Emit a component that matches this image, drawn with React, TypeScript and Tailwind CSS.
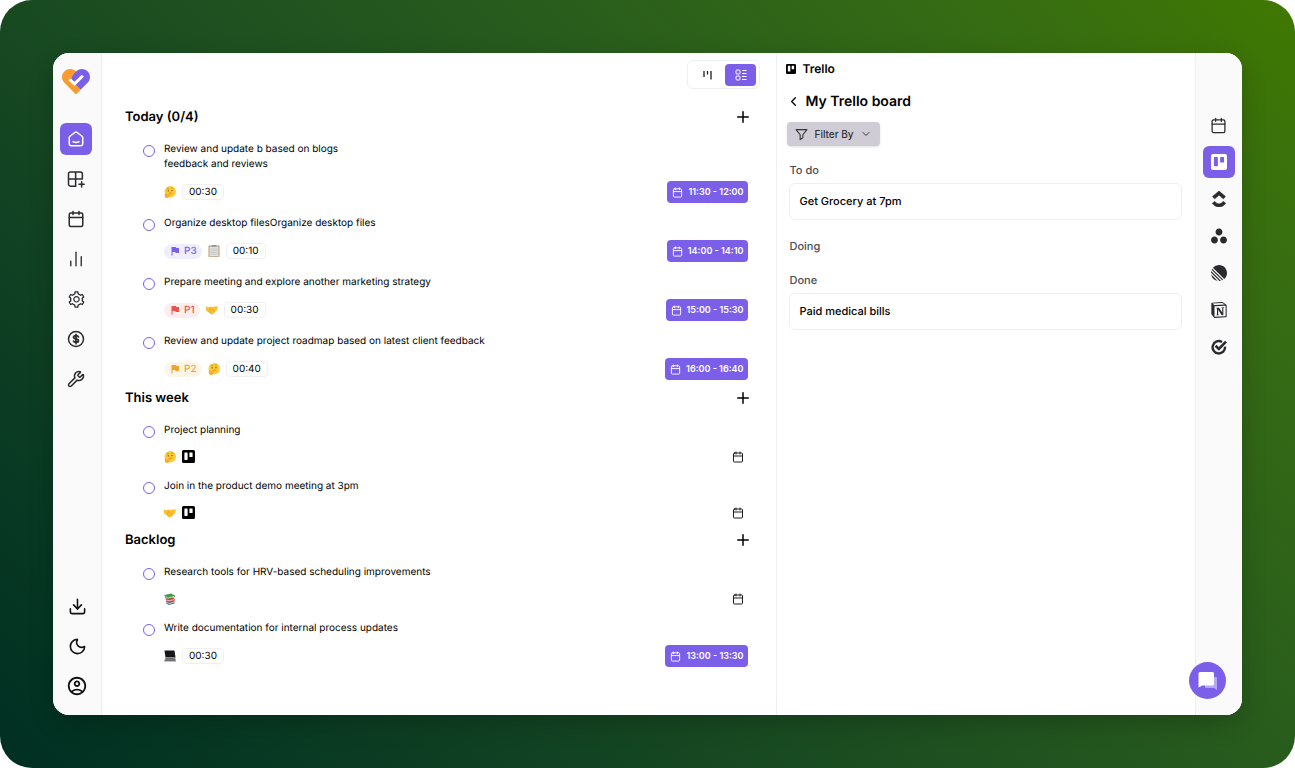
import type { ReactNode } from 'react'
import {
  Calendar,
  ChartNoAxesColumn,
  ChevronDown,
  ChevronLeft,
  Download,
  Moon,
  Plus,
  Wrench,
} from 'lucide-react'
import { AiOutlineSetting } from 'react-icons/ai'
import { MdFlag, MdOutlineAccountCircle } from 'react-icons/md'
import { SiAsana, SiClickup, SiLinear, SiNotion, SiTrello } from 'react-icons/si'

type Task = {
  id: number
  title: string
  emoji: string
  priority?: 'P1' | 'P2' | 'P3'
  duration?: string
  slot?: string
  trello?: boolean
}

const sections: { name: string; tasks: Task[] }[] = [
  {
    name: 'Today (0/4)',
    tasks: [
      {
        id: 1,
        title: 'Review and update b based on blogs\nfeedback and reviews',
        emoji: 'thinking',
        duration: '00:30',
        slot: '11:30 - 12:00',
      },
      {
        id: 2,
        title: 'Organize desktop filesOrganize desktop files',
        emoji: 'clipboard',
        priority: 'P3',
        duration: '00:10',
        slot: '14:00 - 14:10',
      },
      {
        id: 3,
        title: 'Prepare meeting and explore another marketing strategy',
        emoji: 'handshake',
        priority: 'P1',
        duration: '00:30',
        slot: '15:00 - 15:30',
      },
      {
        id: 4,
        title: 'Review and update project roadmap based on latest client feedback',
        emoji: 'thinking',
        priority: 'P2',
        duration: '00:40',
        slot: '16:00 - 16:40',
      },
    ],
  },
  {
    name: 'This week',
    tasks: [
      { id: 5, title: 'Project planning', emoji: 'thinking', trello: true },
      { id: 6, title: 'Join in the product demo meeting at 3pm', emoji: 'handshake', trello: true },
    ],
  },
  {
    name: 'Backlog',
    tasks: [
      { id: 7, title: 'Research tools for HRV-based scheduling improvements', emoji: 'books' },
      {
        id: 8,
        title: 'Write documentation for internal process updates',
        emoji: 'laptop',
        duration: '00:30',
        slot: '13:00 - 13:30',
      },
    ],
  },
]

const boardLists = [
  { name: 'To do', cards: ['Get Grocery at 7pm'] },
  { name: 'Doing', cards: [] },
  { name: 'Done', cards: ['Paid medical bills'] },
]

const priorityStyles = {
  P1: 'bg-[#fdeeec] text-[#e8544f]',
  P2: 'bg-[#fef5e9] text-[#efa42f]',
  P3: 'bg-[#f0edfd] text-[#7c5fe8]',
}

function Logo() {
  return (
    <svg width="30" height="27" viewBox="0 0 30 27" aria-label="Home">
      <path
        d="M15 3.500C12.100.2 7 .1 3.600 3.200.3 6.300.2 11.300 3.200 14.500L15 26.500l4.600-4.800-7-7z"
        fill="#f89b30"
      />
      <path
        d="M15 3.500C17.900.2 23 .1 26.400 3.200c3.300 3.100 3.400 8.100.4 11.300l-7.200 7.200-8-8c-1.600-2.200-1.300-4.300.4-6.500z"
        fill="#7c5fe8"
      />
      <path d="M8.500 11.300l5 4.600 8.300-8.200" fill="none" stroke="#fff" strokeWidth="3" />
    </svg>
  )
}

function HomeIcon() {
  return (
    <svg
      width="18"
      height="18"
      viewBox="0 0 24 24"
      fill="none"
      stroke="currentColor"
      strokeWidth="2"
      strokeLinecap="round"
      strokeLinejoin="round"
    >
      <path d="M3 10.500c0-1.100.5-1.900 1.300-2.500l6.200-4.700c.9-.7 2.100-.7 3 0L19.700 8c.8.600 1.300 1.400 1.300 2.500V18c0 1.700-1.300 3-3 3H6c-1.700 0-3-1.300-3-3z" />
      <path d="M8 15.500c2.400 1.300 5.600 1.300 8 0" />
    </svg>
  )
}

function GridPlusIcon() {
  return (
    <svg
      width="18"
      height="18"
      viewBox="0 0 24 24"
      fill="none"
      stroke="currentColor"
      strokeWidth="2"
      strokeLinecap="round"
    >
      <path d="M20.500 12V5A2.500 2.500 0 0 0 18 2.500H4.500A2.500 2.500 0 0 0 2 5v14a2.500 2.500 0 0 0 2.500 2.500h7V2.500M2 12h18.500M19.500 15.500v7M16 19h7" />
    </svg>
  )
}

function DollarIcon() {
  return (
    <svg
      width="18"
      height="18"
      viewBox="0 0 24 24"
      fill="none"
      stroke="currentColor"
      strokeWidth="2"
      strokeLinecap="round"
    >
      <circle cx="12" cy="12" r="10" />
      <path
        d="M15.300 9.200c-.4-1-1.500-1.700-3.300-1.700-2 0-3.300.8-3.300 2.200 0 3.200 6.600 1.300 6.600 4.600 0 1.400-1.300 2.200-3.300 2.200-1.800 0-3-.7-3.400-1.800M12 5.800v12.400"
        strokeWidth="2.300"
      />
    </svg>
  )
}

function TickTickIcon() {
  return (
    <svg width="16" height="16" viewBox="0 0 24 24" fill="none" stroke="currentColor">
      <path d="M16.500 4.400A9.300 9.300 0 1 0 21 11.500" strokeWidth="3.600" />
      <path d="M6.800 10.200l5 4.600L22.500 4" strokeWidth="4" />
    </svg>
  )
}

function BoardIcon() {
  return (
    <svg width="12" height="12" viewBox="0 0 12 12" fill="none" stroke="currentColor" strokeWidth="1.300">
      <path d="M2 2v6M5.500 2v3.500M9 2v8.500" />
    </svg>
  )
}

function ListIcon() {
  return (
    <svg width="12" height="12" viewBox="0 0 12 12" fill="none" stroke="currentColor">
      <rect x="1" y="1" width="4" height="4" rx="1" />
      <rect x="1" y="7" width="4" height="4" rx="1" />
      <path d="M7 1.500h4.500M7 4.500h4.500M7 7.500h4.500M7 10.500h4.500" />
    </svg>
  )
}

function FunnelIcon() {
  return (
    <svg
      width="13"
      height="13"
      viewBox="0 0 24 24"
      fill="none"
      stroke="currentColor"
      strokeWidth="2"
      strokeLinejoin="round"
    >
      <path d="M2 3h20l-7.500 9.500V18l-5 3.500v-9z" />
    </svg>
  )
}

function ChatIcon() {
  return (
    <svg width="20" height="20" viewBox="0 0 20 20">
      <path d="M7 6h11a1 1 0 0 1 1 1v12l-3-2H8a1 1 0 0 1-1-1z" fill="#b7a6f4" />
      <path d="M2 1h12.500a1.500 1.500 0 0 1 1.500 1.500V13a1.500 1.500 0 0 1-1.500 1.500H4.500l-4 2V2.500A1.500 1.500 0 0 1 2 1z" fill="#fff" />
    </svg>
  )
}

function Emoji({ name }: { name: string }) {
  return (
    <svg width="12" height="12" viewBox="0 0 24 24" className="shrink-0">
      {name === 'thinking' && (
        <>
          <circle cx="12.500" cy="11.500" r="11.500" fill="#fdcb35" />
          <ellipse cx="8.500" cy="9.500" rx="1.300" ry="1.700" fill="#7a5218" />
          <ellipse cx="16" cy="9" rx="1.300" ry="1.700" fill="#7a5218" />
          <path
            d="M5.500 5.500q3-1.500 5 .2M14 4.200q3-1.500 5 1M9.500 14.500q4-1.500 7.500.3"
            fill="none"
            stroke="#b27a20"
            strokeWidth="1.200"
          />
          <path
            d="M2 15c1.500-1.500 3 0 3.500 2l7-1.500c2-.3 2.200 1.800.5 2.300l-3 .8c1.500 2-.5 5-3.500 5.300-4 .300-6-3.500-4.500-8.900z"
            fill="#f5ab2c"
          />
        </>
      )}
      {name === 'handshake' && (
        <>
          <path d="M0 5l5 1.500 4-1.500 4 1 5-1 6 0-2 8-3 1.500-5 5.500-3 1-8-6-3-2z" fill="#fbc02d" />
          <path
            d="M9 8l-2 4q2 1.500 4.500-1.500L18 15M14 15.500l3 2M4 13l7 7"
            fill="none"
            stroke="#dc9c20"
            strokeWidth="1.200"
          />
        </>
      )}
      {name === 'clipboard' && (
        <>
          <rect x="1" y="1" width="22" height="22.500" rx="1" fill="#c09570" />
          <rect x="3" y="3" width="18" height="19" fill="#e2e2e2" />
          <path d="M5 8h14M5 11.500h14M5 15h14M5 18.500h14" stroke="#b7b7b7" strokeWidth="1.200" />
          <rect x="7" y="0" width="10" height="4" rx="1" fill="#9a9a9a" />
        </>
      )}
      {name === 'books' && (
        <>
          <path d="M4 17l13-3 4 3v4l-12 3-5-4z" fill="#5b6674" />
          <path d="M5 19l5 2 11-3" fill="none" stroke="#e8e8e8" strokeWidth="1.500" />
          <path d="M3 11l14-2 5 3v3l-13 3-5-3z" fill="#d8403c" />
          <path d="M5 14l5 1.500 11-2.500" fill="none" stroke="#f4eaea" strokeWidth="1.500" />
          <path d="M1 4l13-3 8 4v3L8 12 2 9z" fill="#3f9a4b" />
          <path d="M3 7l5 3 13-3.500" fill="none" stroke="#e6efe6" strokeWidth="1.500" />
        </>
      )}
      {name === 'laptop' && (
        <>
          <path d="M1 1h20l2 14H3z" fill="#16161a" />
          <path d="M3 15h19.500l1.500 8H0z" fill="#8b8b90" />
          <path d="M4 17.500h17M3 20.500h19" stroke="#4a4a50" strokeWidth="1.300" />
        </>
      )}
    </svg>
  )
}

function RailButton({ label, active, children }: { label: string; active?: boolean; children: ReactNode }) {
  return (
    <button
      aria-label={label}
      className={`flex size-8 items-center justify-center rounded-md ${
        active ? 'bg-[#7c5fe8] text-white' : 'text-[#2b2b2f]'
      }`}
    >
      {children}
    </button>
  )
}

function TaskRow({ task }: { task: Task }) {
  const inputId = `task-${task.id}`

  return (
    <li className="flex gap-[9px]">
      <input
        id={inputId}
        type="checkbox"
        className="mt-[3px] size-3 shrink-0 appearance-none rounded-full border border-[#7c5fe8] checked:bg-[#7c5fe8]"
      />
      <div className="min-w-0 flex-1">
        <label htmlFor={inputId} className="block text-[10px] leading-[15px] whitespace-pre-line text-black">
          {task.title}
        </label>
        <div className={`mt-[9px] flex items-center gap-1.5 ${task.slot ? 'h-[22px]' : 'h-[19px]'}`}>
          {task.priority && (
            <span
              className={`flex h-[15px] items-center gap-[3px] rounded-full px-[5px] text-[10px] font-medium ${priorityStyles[task.priority]}`}
            >
              <MdFlag size={12} />
              {task.priority}
            </span>
          )}
          <Emoji name={task.emoji} />
          {task.trello && <SiTrello size={13} className="text-black" />}
          {task.duration && (
            <span className="flex h-4 items-center rounded border border-[#f0f0f2] px-1.5 text-[10px] text-black">
              {task.duration}
            </span>
          )}
          {task.slot ? (
            <button className="ml-auto flex h-[22px] items-center gap-[5px] rounded bg-[#7c5fe8] px-[5px] text-[9px] font-semibold text-white">
              <Calendar size={11} strokeWidth={2} />
              {task.slot}
            </button>
          ) : (
            <button aria-label="Schedule task" className="mr-1 ml-auto text-[#1c1c1f]">
              <Calendar size={12} strokeWidth={2} />
            </button>
          )}
        </div>
      </div>
    </li>
  )
}

export default function App() {
  return (
    <div className="bg-white font-[Inter,sans-serif] [text-rendering:geometricPrecision]">
      <div className="flex min-h-screen rounded-[32px] bg-linear-45 from-[#002f22] to-[#407800] p-[53px]">
        <div className="relative flex flex-1 overflow-hidden rounded-2xl bg-white shadow-[0_8px_24px_rgba(0,0,0,0.2)]">
          {/* Left navigation */}
          <nav className="flex w-[49px] shrink-0 flex-col items-center border-r border-[#efeff1] bg-[#fafafa] pt-[15px] pr-[2px] pb-[13px]">
            <a href="#">
              <Logo />
            </a>
            <div className="mt-7 flex flex-1 flex-col gap-2">
              <RailButton label="Home" active>
                <HomeIcon />
              </RailButton>
              <RailButton label="Add widget">
                <GridPlusIcon />
              </RailButton>
              <RailButton label="Calendar">
                <Calendar size={18} strokeWidth={2} />
              </RailButton>
              <RailButton label="Statistics">
                <ChartNoAxesColumn size={18} strokeWidth={1.8} />
              </RailButton>
              <RailButton label="Settings">
                <AiOutlineSetting size={19} />
              </RailButton>
              <RailButton label="Billing">
                <DollarIcon />
              </RailButton>
              <RailButton label="Tools">
                <Wrench size={18} />
              </RailButton>
            </div>
            <div className="flex flex-col gap-2 pt-4 pl-[2px]">
              <RailButton label="Download">
                <Download size={19} color="#111" />
              </RailButton>
              <RailButton label="Dark mode">
                <Moon size={19} color="#111" />
              </RailButton>
              <RailButton label="Account">
                <MdOutlineAccountCircle size={22} color="#111" />
              </RailButton>
            </div>
          </nav>

          {/* Task list */}
          <main className="min-w-0 flex-1 pt-[7px] pb-6">
            <div className="flex justify-end pr-4">
              <div className="flex h-[29px] items-center rounded-md border border-[#efeff1] p-[3px]">
                <button aria-label="Board view" className="flex h-[22px] w-[34px] items-center justify-center rounded text-[#1c1c1f]">
                  <BoardIcon />
                </button>
                <button
                  aria-label="List view"
                  className="flex h-[22px] w-[31px] items-center justify-center rounded bg-[#7c5fe8] text-white"
                >
                  <ListIcon />
                </button>
              </div>
            </div>

            <div className="mt-4 flex flex-col gap-1.5">
              {sections.map((section) => (
                <section key={section.name}>
                  <div className="flex h-6 items-center justify-between pr-6 pl-[23px]">
                    <h2 className="pt-0.5 text-[13px] font-semibold text-black">{section.name}</h2>
                    <button aria-label={`Add task to ${section.name}`}>
                      <Plus size={18} strokeWidth={2} />
                    </button>
                  </div>
                  <ul className="mt-[13px] flex flex-col gap-[13px] pr-7 pl-[41px]">
                    {section.tasks.map((task) => (
                      <TaskRow key={task.id} task={task} />
                    ))}
                  </ul>
                </section>
              ))}
            </div>
          </main>

          {/* Trello panel */}
          <aside className="w-[35.2%] shrink-0 border-l border-[#efeff1] pt-[7px] pr-[13px] pl-[9px]">
            <div className="flex h-[18px] items-center gap-1.5">
              <SiTrello size={10} />
              <h2 className="text-xs font-semibold">Trello</h2>
            </div>
            <div className="mt-[13px] flex h-5 items-center gap-1">
              <button aria-label="Back">
                <ChevronLeft size={15} />
              </button>
              <h1 className="pt-0.5 text-sm font-semibold">My Trello board</h1>
            </div>
            <button className="mt-[11px] ml-px flex h-6 items-center gap-1.5 rounded bg-[#cfccd6] px-2 text-[10px] font-medium text-[#333] shadow-sm">
              <FunnelIcon />
              Filter By
              <ChevronDown size={12} />
            </button>
            <div className="mt-4 ml-[3px] flex flex-col gap-[18px]">
              {boardLists.map((list) => (
                <section key={list.name}>
                  <h3 className="text-[11px] leading-4 font-medium text-[#4b4b52]">{list.name}</h3>
                  {list.cards.map((card) => (
                    <div
                      key={card}
                      className="mt-[5px] flex h-[37px] items-center rounded-md border border-[#efeff1] px-[9px] text-[11px] font-medium text-black"
                    >
                      {card}
                    </div>
                  ))}
                </section>
              ))}
            </div>
          </aside>

          {/* Integrations */}
          <nav className="flex w-[47px] shrink-0 flex-col items-center gap-[5px] border-l border-[#efeff1] bg-[#fafafa] pt-14 pr-px">
            <RailButton label="Calendar">
              <Calendar size={17} strokeWidth={1.8} />
            </RailButton>
            <RailButton label="Trello" active>
              <SiTrello size={16} />
            </RailButton>
            <RailButton label="ClickUp">
              <SiClickup size={16} stroke="currentColor" strokeWidth={1} />
            </RailButton>
            <RailButton label="Asana">
              <SiAsana size={16} />
            </RailButton>
            <RailButton label="Linear">
              <SiLinear size={16} />
            </RailButton>
            <RailButton label="Notion">
              <SiNotion size={16} />
            </RailButton>
            <RailButton label="TickTick">
              <TickTickIcon />
            </RailButton>
          </nav>

          <button
            aria-label="Open chat"
            className="absolute right-4 bottom-4 flex size-[37px] items-center justify-center rounded-full bg-[#7c5fe8]"
          >
            <ChatIcon />
          </button>
        </div>
      </div>
    </div>
  )
}
